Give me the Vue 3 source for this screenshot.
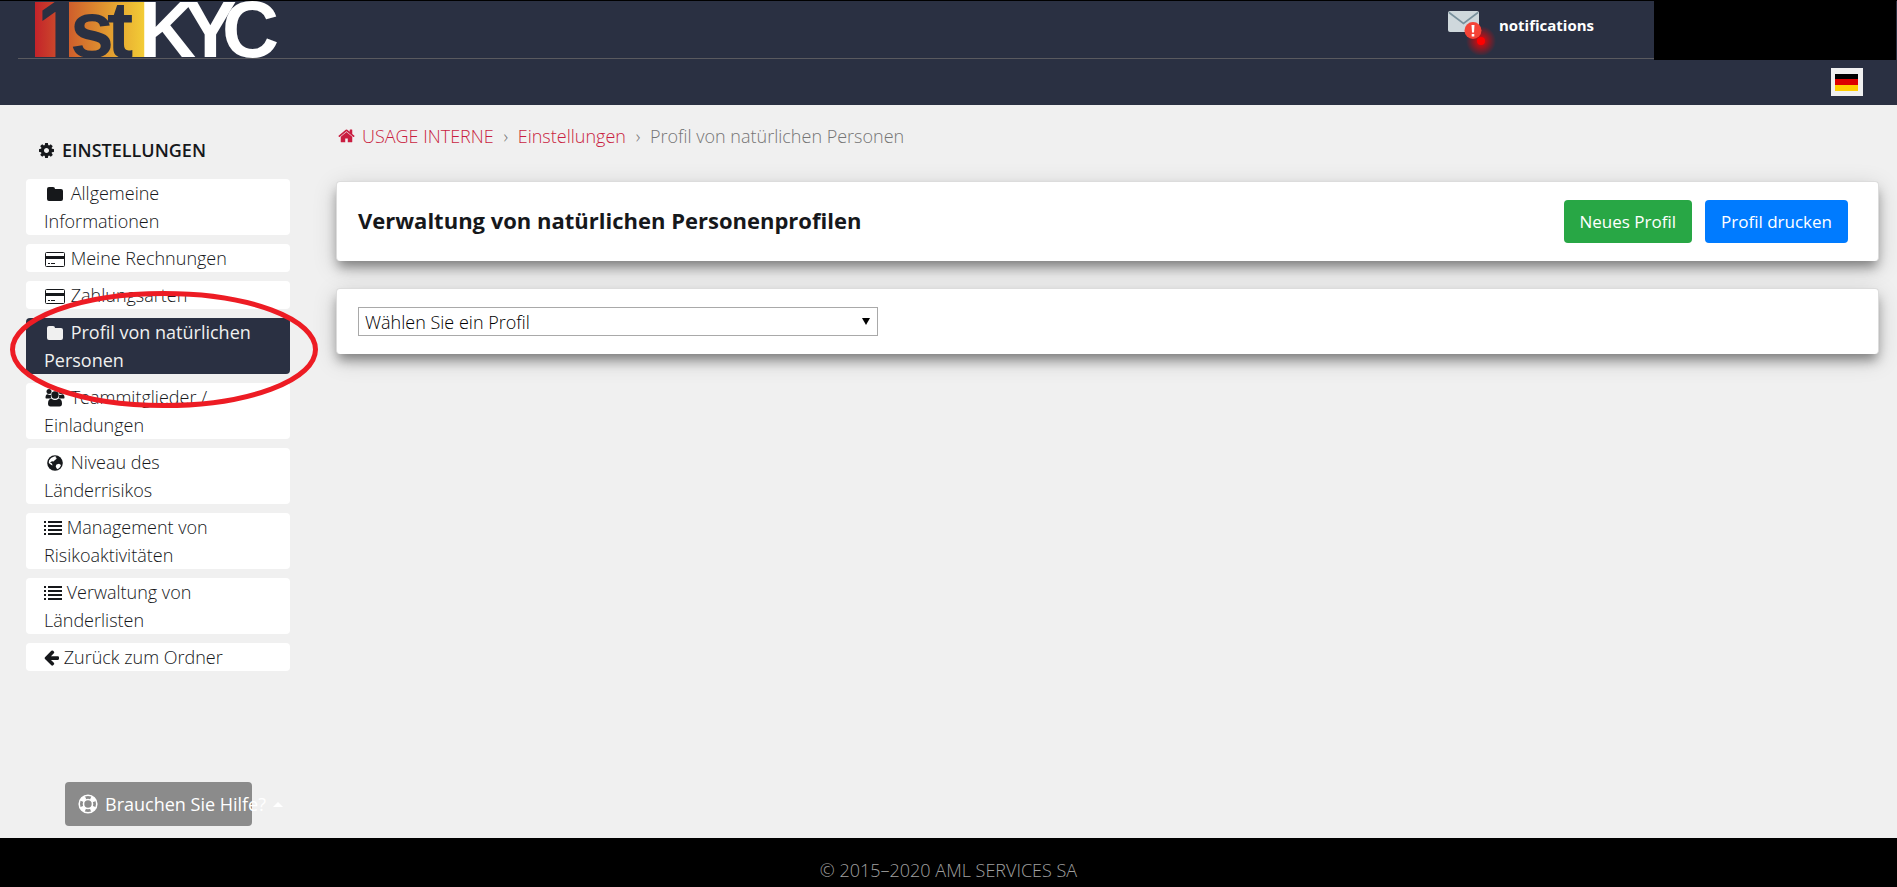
<template>
  <div class="page">
    <header class="header">
      <div class="header-top">
        <div class="header-main">
          <a href="#" class="logo" aria-label="1st KYC">
            <svg width="242" height="57" viewBox="0 0 242 57">
              <defs>
                <linearGradient id="logo-fill" x1="0" x2="1" y1="0" y2="0">
                  <stop offset="0" stop-color="#c4232a" />
                  <stop offset="0.35" stop-color="#d1652c" />
                  <stop offset="0.7" stop-color="#e3a030" />
                  <stop offset="1" stop-color="#f3cd36" />
                </linearGradient>
              </defs>
              <rect x="0" y="1" width="110" height="55" fill="url(#logo-fill)" />
              <rect x="23" y="1" width="11" height="55" fill="#2a3042" />
              <text class="logo-one" x="4" y="56">1</text>
              <text class="logo-text" x="35 72" y="56" fill="#2a3042">st</text>
              <text class="logo-text" x="104 149 187" y="56" fill="#ffffff">KYC</text>
            </svg>
          </a>
          <a href="#" class="notifications">
            <svg class="mail" width="48" height="48" viewBox="0 0 48 48">
              <defs>
                <radialGradient id="glow">
                  <stop offset="0.2" stop-color="#ff0000" stop-opacity="0.75" />
                  <stop offset="1" stop-color="#ff0000" stop-opacity="0" />
                </radialGradient>
              </defs>
              <rect x="0" y="4" width="31" height="21" rx="2" fill="#cfd8dc" />
              <path d="M1 5.500l14.500 11L30 5.500" fill="none" stroke="#78909c" stroke-width="1.600" />
              <circle cx="33" cy="34" r="15" fill="url(#glow)" />
              <circle cx="25" cy="23.500" r="8.500" fill="#f44336" />
              <path d="M23.500 18h3l-.5 7.500h-2zM23.700 27h2.600v2.500h-2.600z" fill="#fff" />
              <circle cx="33" cy="34" r="4" fill="#ff0000" />
            </svg>
            <span>notifications</span>
          </a>
        </div>
        <div class="account"></div>
      </div>
      <div class="header-bottom">
        <button class="language" type="button" aria-label="Deutsch">
          <svg width="23" height="17" viewBox="0 0 23 17">
            <rect width="23" height="6" fill="#000" />
            <rect y="5" width="23" height="7" fill="#dd0000" />
            <rect y="11" width="23" height="6" fill="#ffce00" />
          </svg>
        </button>
      </div>
    </header>

    <div class="body">
      <aside class="sidebar">
        <h2 class="sidebar-title">
          <svg class="icon-cog" viewBox="128 128 1536 1536"><path :d="icons.cog" /></svg>
          EINSTELLUNGEN
        </h2>
        <nav class="menu">
          <div v-for="item in menu" :key="item.label" class="menu-entry">
            <a href="#" class="menu-item" :class="{ active: item.active }">
              <svg v-if="item.icon === 'folder'" class="icon wide" viewBox="0 0 22 16">
                <path d="M3 3q0-2 2-2h4q2 0 2 2h6q2 0 2 2v8q0 2-2 2H5q-2 0-2-2z" />
              </svg>
              <svg v-else-if="item.icon === 'card'" class="icon wide" viewBox="0 0 22 16">
                <rect x="1.500" y="1.500" width="19" height="14" rx="1" fill="none" stroke="currentColor" />
                <path d="M1.500 5h19v3h-19zM4 12h2v1H4zM7 12h4v1H7z" />
              </svg>
              <svg v-else-if="item.icon === 'users'" class="icon wide" viewBox="0 0 22 16">
                <circle cx="5" cy="1.500" r="2.500" />
                <circle cx="17" cy="1.500" r="2.500" />
                <path d="M1.500 8q0-3.700 2-3.700 2 1 3.500.5Q6.500 7 7.500 8.500h-4q-2 0-2-.5zM20.500 8q0-3.700-2-3.700-2 1-3.500.5.5 2.200-.5 3.700h4q2 0 2-.5z" />
                <circle cx="11" cy="5" r="3.700" />
                <path d="M4 13.500Q4 9 7.500 8.800q3.500 2.400 7 0Q18 9 18 13.500q0 3-2.500 3h-9q-2.500 0-2.500-3z" />
              </svg>
              <svg v-else-if="item.icon === 'globe'" class="icon wide" viewBox="0 0 22 16">
                <circle cx="11" cy="8" r="7.800" />
                <path fill="#fff" d="M9 2l2-.7 1.500.7-1 1 1.500.5-2 1.500-1.500 1.500-1.500-.3-2 1.300 2 1 .5 2-1.500-.8L4.800 8 5 5.500 7 3zM12.500 9.500l2.500-.8 2 1.300-1 2.300-2.300 2-1.200-1-.8-2z" />
              </svg>
              <svg v-else-if="item.icon === 'list'" class="icon list" viewBox="0 0 18 16">
                <path d="M0 1h2v2H0zM0 5h2v2H0zM0 9h2v2H0zM0 13h2v2H0zM4 1h14v2H4zM4 5h14v2H4zM4 9h14v2H4zM4 13h14v2H4z" />
              </svg>
              <svg v-else class="icon back" viewBox="128 190 1536 1536"><path :d="icons.arrow" /></svg>
              {{ item.label }}
            </a>
            <svg v-if="item.active" class="marker" viewBox="0 0 308 117" preserveAspectRatio="none">
              <ellipse cx="154" cy="58.500" rx="151.500" ry="56" />
            </svg>
          </div>
        </nav>
        <button class="help" type="button">
          <svg width="20" height="20" viewBox="0 0 20 20" fill="none" stroke="#fff">
            <circle cx="10" cy="10" r="8.800" stroke-width="1.600" />
            <circle cx="10" cy="10" r="4.500" stroke-width="1.600" />
            <circle cx="10" cy="10" r="6.700" stroke-width="4" stroke-dasharray="5.260 5.260" stroke-dashoffset="-2.630" />
          </svg>
          <span>Brauchen Sie Hilfe?</span>
          <svg width="10" height="5" viewBox="0 0 10 5"><path d="M0 5l5-5 5 5z" fill="#fff" /></svg>
        </button>
      </aside>

      <main class="content">
        <nav class="breadcrumb" aria-label="Breadcrumb">
          <a href="#">
            <svg class="icon-home" viewBox="64 200 1664 1400"><path :d="icons.home" /></svg>USAGE INTERNE</a>
          <span class="separator">›</span>
          <a href="#">Einstellungen</a>
          <span class="separator">›</span>
          <span>Profil von natürlichen Personen</span>
        </nav>

        <section class="card card-title">
          <h1>Verwaltung von natürlichen Personenprofilen</h1>
          <div class="actions">
            <button class="btn btn-success" type="button">Neues Profil</button>
            <button class="btn btn-primary" type="button">Profil drucken</button>
          </div>
        </section>

        <section class="card card-select">
          <div class="select-wrap">
            <select v-model="profile" aria-label="Profil">
              <option value="">Wählen Sie ein Profil</option>
            </select>
            <svg class="select-arrow" viewBox="0 0 8 7"><path d="M0 0h8L4 7z" /></svg>
          </div>
        </section>
      </main>
    </div>

    <footer class="footer">© 2015–2020 AML SERVICES SA</footer>
  </div>
</template>

<script setup>
import { ref } from 'vue';

const profile = ref('');

const menu = [
  { label: 'Allgemeine Informationen', icon: 'folder' },
  { label: 'Meine Rechnungen', icon: 'card' },
  { label: 'Zahlungsarten', icon: 'card' },
  { label: 'Profil von natürlichen Personen', icon: 'folder', active: true },
  { label: 'Teammitglieder / Einladungen', icon: 'users' },
  { label: 'Niveau des Länderrisikos', icon: 'globe' },
  { label: 'Management von Risikoaktivitäten', icon: 'list' },
  { label: 'Verwaltung von Länderlisten', icon: 'list' },
  { label: 'Zurück zum Ordner', icon: 'back' },
];

const icons = {
  cog: 'M1152 896q0-106-75-181t-181-75-181 75-75 181 75 181 181 75 181-75 75-181zm512-109v222q0 12-8 23t-20 13l-185 28q-19 54-39 91 35 50 107 138 10 12 10 25t-9 23q-27 37-99 108t-94 71q-12 0-26-9l-138-108q-44 23-91 38-16 136-29 186-7 28-36 28h-222q-14 0-24.500-8.500t-11.500-21.500l-28-184q-49-16-90-37l-141 107q-10 9-25 9-14 0-25-11-126-114-165-168-7-10-7-23 0-12 8-23 15-21 51-66.500t54-70.500q-27-50-41-99l-183-27q-13-2-21-12.500t-8-23.500v-222q0-12 8-23t19-13l186-28q14-46 39-92-40-57-107-138-10-12-10-24 0-10 9-23 26-36 98.500-107.500t94.500-71.500q13 0 26 10l138 107q44-23 91-38 16-136 29-186 7-28 36-28h222q14 0 24.500 8.500t11.500 21.500l28 184q49 16 90 37l142-107q9-9 24-9 13 0 25 10 129 119 165 170 7 8 7 22 0 12-8 23-15 21-51 66.500t-54 70.500q26 50 41 98l183 28q13 2 21 12.500t8 23.500z',
  home: 'M1472 992v480q0 26-19 45t-45 19h-384v-384h-256v384h-384q-26 0-45-19t-19-45v-480q0-1 .5-3t.5-3l575-474 575 474q1 2 1 6zm223-69l-62 74q-8 9-21 11h-3q-13 0-21-7l-692-577-692 577q-12 8-24 7-13-2-21-11l-62-74q-8-10-7-23.500t11-21.500l719-599q32-26 76-26t76 26l244 204v-195q0-14 9-23t23-9h192q14 0 23 9t9 23v408l219 182q10 8 11 21.500t-7 23.500z',
  arrow: 'M1664 896v128q0 53-32.500 90.500t-84.500 37.500h-704l293 294q38 36 38 90t-38 90l-75 76q-37 37-90 37-52 0-91-37l-651-652q-37-37-37-90 0-52 37-91l651-650q38-38 91-38 52 0 90 38l75 74q38 38 38 91t-38 91l-293 293h704q52 0 84.500 37.500t32.500 90.500z',
};
</script>

<style>
body {
  background: #f0f0f0;
}
</style>

<style scoped>
.page {
  display: flex;
  flex-direction: column;
  min-height: 100vh;
  font-family: "Open Sans", sans-serif;
  font-size: 18px;
  font-weight: 300;
  line-height: 28px;
  color: #16181b;
  background: #f0f0f0;
}

a {
  color: inherit;
  text-decoration: none;
}

button,
select {
  font: inherit;
}

svg {
  flex-shrink: 0;
}

/* header */
.header {
  background: #2a3042;
  border-top: 1px solid #000;
}

.header-top {
  display: flex;
  margin: 0 1px 0 18px;
}

.header-main {
  display: flex;
  flex: 1;
  justify-content: space-between;
  height: 57px;
  border-bottom: 1px solid #5a5a5f;
}

.logo {
  display: block;
  margin-left: 17px;
}

.logo svg {
  display: block;
  overflow: visible;
}

.logo-text {
  font-family: "Liberation Sans", sans-serif;
  font-size: 79px;
  font-weight: 700;
}

.logo-one {
  font-family: Inter, sans-serif;
  font-size: 76px;
  font-weight: 700;
  fill: #2a3042;
}

.notifications {
  display: flex;
  gap: 3px;
  margin-right: 60px;
  padding-top: 6px;
  font-size: 15px;
  font-weight: 700;
  line-height: 36px;
  color: #fff;
}

.account {
  width: 242px;
  height: 60px;
  margin: -1px 0;
  background: #000;
}

.header-bottom {
  display: flex;
  justify-content: flex-end;
  align-items: center;
  height: 46px;
  padding-right: 34px;
}

.language {
  display: flex;
  align-items: center;
  width: 32px;
  height: 28px;
  padding: 0 4px;
  border: 0;
  background: #f0f0f0;
}

/* page body */
.body {
  display: flex;
  flex: 1;
}

.sidebar {
  display: flex;
  flex-direction: column;
  width: 264px;
  padding: 31px 46px 12px 26px;
}

.sidebar-title {
  display: flex;
  align-items: center;
  gap: 8px;
  margin: 0 0 15px 13px;
  font-size: 18px;
  font-weight: 600;
  line-height: 28px;
}

.icon-cog {
  width: 15px;
  height: 15px;
  fill: currentColor;
}

.menu {
  display: flex;
  flex-direction: column;
  gap: 9px;
}

.menu-entry {
  position: relative;
}

.menu-item {
  display: block;
  padding: 0 30px 0 18px;
  border-radius: 4px;
  background: #fff;
}

.menu-item.active {
  font-weight: 400;
  color: #f0f0f0;
  background: #2a3042;
}

.icon {
  height: 16px;
  vertical-align: -2px;
  fill: currentColor;
  overflow: visible;
}

.wide {
  width: 22px;
}

.list {
  width: 18px;
}

.back {
  width: 15px;
}

.marker {
  position: absolute;
  z-index: 1;
  top: -27px;
  left: -16px;
  width: 308px;
  height: 117px;
  pointer-events: none;
}

.marker ellipse {
  fill: none;
  stroke: #ed1c24;
  stroke-width: 5;
}

.help {
  display: flex;
  align-items: center;
  gap: 7px;
  width: 187px;
  height: 44px;
  margin: auto 0 0 39px;
  padding: 0 13px;
  border: 0;
  border-radius: 4px;
  font-weight: 400;
  white-space: nowrap;
  color: #fff;
  background: #8b8b8b;
}

/* content */
.content {
  flex: 1;
  padding: 17px 18px 0 0;
}

.breadcrumb {
  display: flex;
  margin-bottom: 31px;
  padding-left: 2px;
  color: #757575;
}

.breadcrumb a {
  color: #c91d40;
}

.icon-home {
  width: 17px;
  height: 14px;
  margin-right: 7px;
  fill: currentColor;
}

.separator {
  width: 24px;
  text-align: center;
}

.card {
  display: flex;
  align-items: flex-start;
  border: 1px solid #dcdcdc;
  border-radius: 4px;
  border-bottom: 0;
  background: #fff;
  box-shadow: 0 8px 12px -2px rgba(0, 0, 0, 0.4), 0 6px 24px rgba(0, 0, 0, 0.16);
}

.card-title {
  justify-content: space-between;
  margin-bottom: 27px;
  padding: 18px 30px 18px 21px;
}

.card-title h1 {
  margin: 0;
  font-size: 22px;
  font-weight: 700;
  line-height: 40px;
}

.actions {
  display: flex;
  gap: 13px;
}

.btn {
  height: 43px;
  padding: 0 16px;
  border: 0;
  border-radius: 4px;
  font-size: 17px;
  font-weight: 400;
  color: #fff;
}

.btn-success {
  background: #28a745;
}

.btn-primary {
  background: #007bff;
}

.card-select {
  padding: 18px 21px;
}

.select-wrap {
  position: relative;
  width: 100%;
  max-width: 520px;
}

select {
  display: block;
  width: 100%;
  height: 29px;
  padding: 0 6px;
  border: 1px solid #a9a9a9;
  border-radius: 0;
  appearance: none;
  line-height: 26px;
  color: #000;
  background: #fff;
}

.select-arrow {
  position: absolute;
  top: 11px;
  right: 8px;
  width: 8px;
  height: 7px;
  pointer-events: none;
}

.footer {
  padding: 18px 0 3px;
  text-align: center;
  color: #a0a0a0;
  background: #000;
}
</style>
